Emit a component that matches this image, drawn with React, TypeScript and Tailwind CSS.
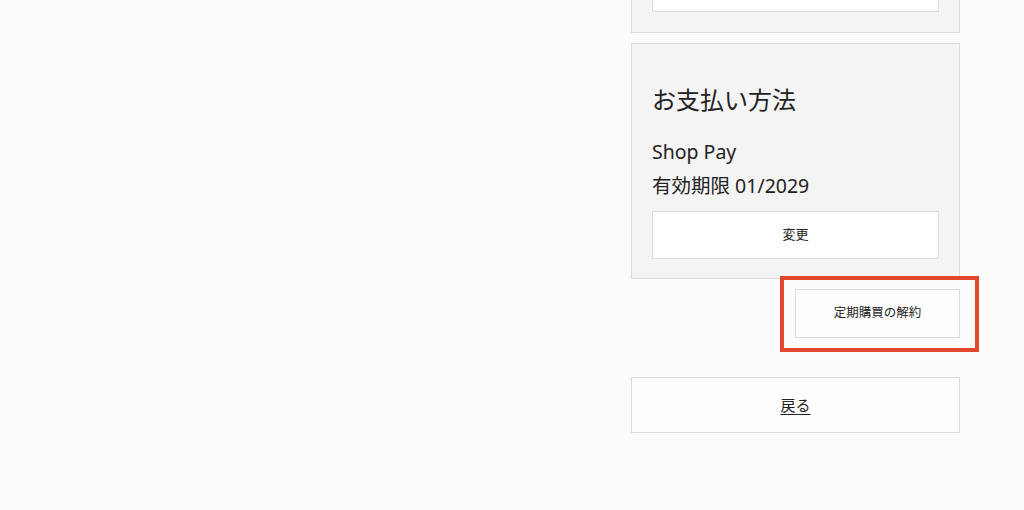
const FONT = "font-['Helvetica_Neue','Noto_Sans','Noto_Sans_CJK_JP',sans-serif]";

export default function App() {
  return (
    <div className={`w-[1024px] h-[510px] overflow-hidden bg-[#fcfcfc] text-[#222] ${FONT}`}>
      <div className="flex justify-end pr-[64px]">
        <div className="w-[329px] flex flex-col">
          {/* previous card, scrolled off the top */}
          <div className="h-[33px] border border-t-0 border-[#dcdcdc] bg-[#f4f4f4] px-[20px]">
            <div className="h-[12px] border border-t-0 border-[#dcdcdc] bg-white" />
          </div>

          {/* payment method */}
          <div className="mt-[10px] border border-[#dcdcdc] bg-[#f4f4f4] px-[20px] pt-[40px] pb-[19px]">
            <h2 className="text-[24px] leading-[32px] font-normal">お支払い方法</h2>
            <div className="mt-[19px] text-[19.5px] leading-[34px]">
              <p>Shop Pay</p>
              <p>有効期限 01/2029</p>
            </div>
            <button className="mt-[8px] w-full h-[48px] border border-[#dcdcdc] bg-white text-[13px] text-[#222]">
              変更
            </button>
          </div>

          {/* cancel subscription */}
          <div className="flex justify-end mt-[10px]">
            <div className="relative">
              <button className="w-[165px] h-[49px] border border-[#dcdcdc] bg-[#fdfdfd] text-[12.5px] text-[#222]">
                定期購買の解約
              </button>
              <div className="absolute -left-[15px] -top-[13px] w-[199px] h-[76px] border-[4px] border-[#e1472d] pointer-events-none" />
            </div>
          </div>

          {/* back */}
          <a className="mt-[39px] h-[56px] flex items-center justify-center border border-[#dcdcdc] bg-[#fdfdfd] text-[15px] underline underline-offset-[3px]">
            戻る
          </a>
        </div>
      </div>
    </div>
  );
}
